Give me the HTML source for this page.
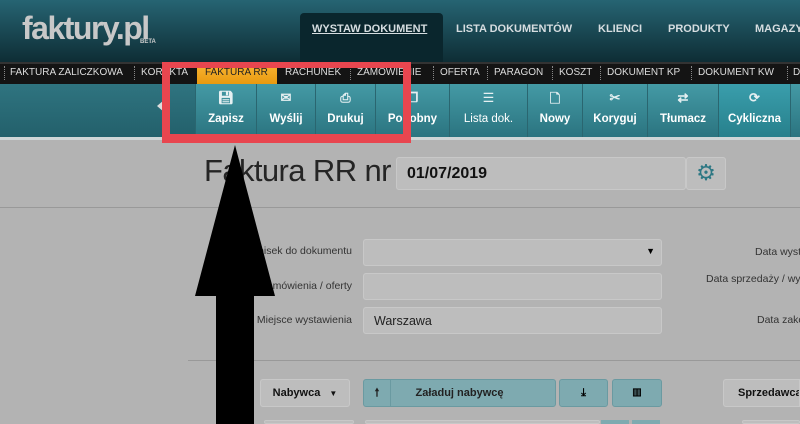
<!DOCTYPE html>
<html><head><meta charset="utf-8"><style>
*{box-sizing:border-box;margin:0;padding:0}
body{width:800px;height:424px;overflow:hidden;background:#b3b3b3;font-family:"Liberation Sans",sans-serif;position:relative}
.a{position:absolute;white-space:nowrap}
#hdr{left:0;top:0;width:800px;height:62px;background:linear-gradient(#266473,#0e2d35)}
#logo{left:22px;top:10px;font-size:32px;font-weight:bold;color:#c8c8c8;letter-spacing:-1.5px}
#beta{left:140px;top:39px;font-size:6px;color:#ccc;font-weight:bold}
.top{top:23px;color:#d6dde0;font-size:11px;font-weight:bold}
#tab{left:300px;top:13px;width:143px;height:49px;background:#0a262d;border-radius:4px 4px 0 0}
#sub{left:0;top:62px;width:800px;height:22px;background:#141414;border-top:2px solid #333}
.s{top:67px;font-size:10px;color:#ddd}
.dot{top:66px;width:0;height:14px;border-left:1px dotted #888}
#tb{left:0;top:84px;width:800px;height:53px;background:linear-gradient(#449aa5,#2b7480)}
.b{top:84px;height:53px;border-left:1px solid #2a6670;color:#fff;font-size:11.5px;font-weight:bold;text-align:center;padding-top:29px}
.ic{position:absolute;left:0;right:0;top:6px;font-size:13px;color:#e6f0f2}
#line{left:0;top:137px;width:800px;height:3px;background:#cfd6d7}
.lab{font-size:10.5px;color:#333;text-align:right}
.in{background:#bdbdbd;border:1px solid #c8c8c8;border-radius:3px}
.btn{border-radius:3px;font-size:11px;font-weight:bold;text-align:center;line-height:26px}
</style></head><body>
<div id="hdr" class="a"></div>
<div id="logo" class="a">faktury.pl</div>
<div id="beta" class="a">BETA</div>
<div id="tab" class="a"></div>
<div class="a top" style="left:312px;text-decoration:underline">WYSTAW DOKUMENT</div>
<div class="a top" style="left:456px">LISTA DOKUMENTÓW</div>
<div class="a top" style="left:598px">KLIENCI</div>
<div class="a top" style="left:668px">PRODUKTY</div>
<div class="a top" style="left:755px">MAGAZYN</div>
<div id="sub" class="a"></div>
<div class="a" style="left:197px;top:64px;width:80px;height:20px;background:linear-gradient(#f8b432,#e99a10)"></div>
<div class="a s" style="left:10px">FAKTURA ZALICZKOWA</div>
<div class="a s" style="left:141px">KOREKTA</div>
<div class="a s" style="left:205px;color:#222">FAKTURA RR</div>
<div class="a s" style="left:285px">RACHUNEK</div>
<div class="a s" style="left:357px">ZAMÓWIENIE</div>
<div class="a s" style="left:440px">OFERTA</div>
<div class="a s" style="left:494px">PARAGON</div>
<div class="a s" style="left:559px">KOSZT</div>
<div class="a s" style="left:607px">DOKUMENT KP</div>
<div class="a s" style="left:698px">DOKUMENT KW</div>
<div class="a s" style="left:793px">D</div>
<div class="a dot" style="left:4px"></div><div class="a dot" style="left:134px"></div><div class="a dot" style="left:350px"></div><div class="a dot" style="left:433px"></div><div class="a dot" style="left:487px"></div><div class="a dot" style="left:552px"></div><div class="a dot" style="left:600px"></div><div class="a dot" style="left:691px"></div><div class="a dot" style="left:787px"></div>
<div id="tb" class="a"></div>
<div class="a" style="left:0;top:84px;width:195px;height:53px;background:linear-gradient(#2f7480,#23606b)"></div>
<div class="a" style="left:157px;top:100px;width:0;height:0;border-top:6px solid transparent;border-bottom:6px solid transparent;border-right:7px solid #ddd"></div>
<div class="a b" style="left:195px;width:61px"><span class="ic">💾︎</span>Zapisz</div>
<div class="a b" style="left:256px;width:59px"><span class="ic">✉</span>Wyślij</div>
<div class="a b" style="left:315px;width:60px"><span class="ic">⎙</span>Drukuj</div>
<div class="a b" style="left:375px;width:74px"><span class="ic">❐</span>Podobny</div>
<div class="a b" style="left:449px;width:78px;font-weight:normal"><span class="ic">☰</span>Lista dok.</div>
<div class="a b" style="left:527px;width:55px"><span class="ic">🗋︎</span>Nowy</div>
<div class="a b" style="left:582px;width:65px"><span class="ic">✂</span>Koryguj</div>
<div class="a b" style="left:647px;width:71px"><span class="ic">⇄</span>Tłumacz</div>
<div class="a b" style="left:718px;width:72px;background:linear-gradient(#3a9eac,#27808c)"><span class="ic">⟳</span>Cykliczna</div>
<div class="a b" style="left:790px;width:10px"></div>
<div id="line" class="a"></div>

<div class="a" style="left:204px;top:153px;font-size:31px;color:#252525;letter-spacing:-0.6px">Faktura RR nr</div>
<div class="a in" style="left:396px;top:157px;width:290px;height:33px;font-size:16px;font-weight:bold;color:#111;padding:7px 10px">01/07/2019</div>
<div class="a in" style="left:686px;top:157px;width:40px;height:33px;color:#2e7884;font-size:22px;text-align:center;line-height:30px">⚙</div>
<div class="a" style="left:0;top:207px;width:800px;height:1px;background:#999"></div>

<div class="a lab" style="left:200px;top:245px;width:152px">Dopisek do dokumentu</div>
<div class="a in" style="left:363px;top:239px;width:299px;height:27px"><span style="position:absolute;right:6px;top:6px;font-size:9px">▼</span></div>
<div class="a lab" style="left:200px;top:280px;width:152px">Nr zamówienia / oferty</div>
<div class="a in" style="left:363px;top:273px;width:299px;height:27px"></div>
<div class="a lab" style="left:200px;top:314px;width:152px">Miejsce wystawienia</div>
<div class="a in" style="left:363px;top:307px;width:299px;height:27px;font-size:12.5px;color:#222;padding:6px 10px">Warszawa</div>
<div class="a lab" style="left:755px;top:246px;text-align:left">Data wystawienia</div>
<div class="a lab" style="left:706px;top:273px;text-align:left">Data sprzedaży / wykonania</div>
<div class="a lab" style="left:757px;top:314px;text-align:left">Data zakończenia</div>
<div class="a" style="left:188px;top:360px;width:612px;height:1px;background:#999"></div>

<div class="a in btn" style="left:260px;top:379px;width:90px;height:28px;color:#111">Nabywca <span style="font-size:8px;margin-left:6px">▼</span></div>
<div class="a btn" style="left:363px;top:379px;width:193px;height:28px;background:#7eaab0;border:1px solid #6a9aa1;color:#222">
<span style="position:absolute;left:0;top:0;width:27px;height:26px;border-right:1px solid #6a9aa1">🠕</span>Załaduj nabywcę</div>
<div class="a btn" style="left:559px;top:379px;width:49px;height:28px;background:#7eaab0;border:1px solid #6a9aa1">⤓</div>
<div class="a btn" style="left:612px;top:379px;width:50px;height:28px;background:#7eaab0;border:1px solid #6a9aa1;font-size:10px">▥</div>
<div class="a in btn" style="left:723px;top:379px;width:77px;height:28px;color:#111;text-align:left;padding-left:14px;overflow:hidden;border-radius:3px 0 0 3px">Sprzedawca</div>
<div class="a in" style="left:264px;top:420px;width:90px;height:4px"></div>
<div class="a in" style="left:365px;top:420px;width:235px;height:4px"></div>
<div class="a" style="left:601px;top:420px;width:28px;height:4px;background:#7eaab0"></div>
<div class="a" style="left:632px;top:420px;width:28px;height:4px;background:#7eaab0"></div>
<div class="a in" style="left:742px;top:420px;width:58px;height:4px"></div>

<div class="a" style="left:162px;top:62px;width:249px;height:81px;border:6px solid #e8464f;border-width:6px 8px 9px 8px"></div>
<svg class="a" style="left:0;top:0" width="800" height="424"><polygon points="235,145 275,296 254,296 254,424 216,424 216,296 195,296" fill="#000"/></svg>
</body></html>
